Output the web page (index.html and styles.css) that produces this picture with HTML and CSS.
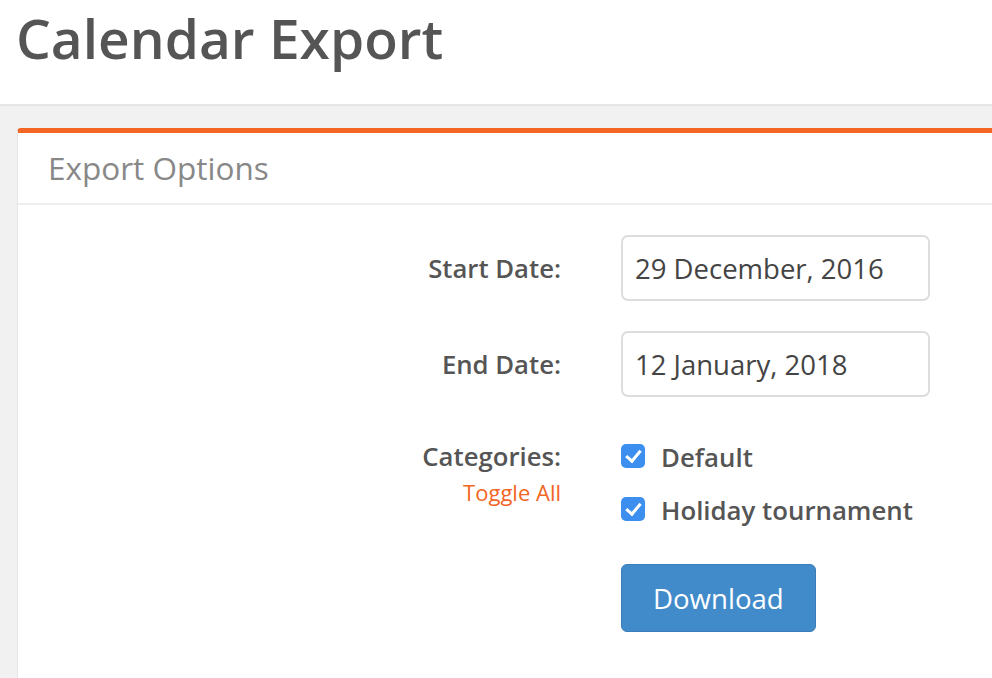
FILE: index.html
```html
<!DOCTYPE html>
<html lang="en">
<head>
    <meta charset="UTF-8">
    <meta name="viewport" content="width=device-width, initial-scale=1.0">
    <title>Calendar Export</title>
    <link rel="stylesheet" href="styles.css">
</head>
<body>
    <header class="page-header">
        <h1>Calendar Export</h1>
    </header>

    <main class="page-body">
        <section class="panel">
            <h2 class="panel-title">Export Options</h2>

            <form class="export-form">
                <div class="form-row">
                    <label class="form-label" for="startDate">Start Date:</label>
                    <input class="date-input" type="text" id="startDate" value="29 December, 2016">
                </div>

                <div class="form-row">
                    <label class="form-label" for="endDate">End Date:</label>
                    <input class="date-input" type="text" id="endDate" value="12 January, 2018">
                </div>

                <div class="form-row categories-row">
                    <div class="form-label">
                        <div>Categories:</div>
                        <a class="toggle-all" href="#">Toggle All</a>
                    </div>
                    <div class="category-list">
                        <label class="category">
                            <input type="checkbox" checked>
                            <span>Default</span>
                        </label>
                        <label class="category">
                            <input type="checkbox" checked>
                            <span>Holiday tournament</span>
                        </label>
                        <button type="submit" class="download-btn">Download</button>
                    </div>
                </div>
            </form>
        </section>
    </main>
</body>
</html>
```

FILE: styles.css
```css
html, body {
    margin: 0;
    padding: 0;
    height: 100%;
}

body {
    font-family: "Open Sans", "Liberation Sans", sans-serif;
    background-color: #f1f1f1;
    color: #555;
    overflow: hidden;
}

.page-header {
    background-color: #fff;
    height: 104px;
    border-bottom: 2px solid #e6e6e6;
}

.page-header h1 {
    margin: 0;
    padding: 0 0 0 16px;
    font-size: 55px;
    line-height: normal;
    font-weight: 600;
    color: #555;
}

.page-body {
    padding-top: 22px;
}

.panel {
    margin-left: 17px;
    margin-right: -20px;
    background-color: #fff;
    border-left: 1px solid #e6e6e6;
    border-top: 5px solid #f26522;
    border-top-left-radius: 4px;
    min-height: 620px;
}

.panel-title {
    margin: 0;
    padding: 19px 30px 19px 30px;
    font-size: 31.5px;
    line-height: 32px;
    font-weight: 400;
    color: #888;
    border-bottom: 2px solid #eee;
}

.export-form {
    padding-top: 30px;
}

.form-row {
    display: flex;
    align-items: center;
    margin-bottom: 30px;
}

.form-label {
    width: 543px;
    box-sizing: border-box;
    text-align: right;
    font-size: 25.7px;
    font-weight: 600;
    color: #555;
    margin-right: 60px;
}

.date-input {
    width: 309px;
    height: 66px;
    box-sizing: border-box;
    border: 2px solid #ddd;
    border-radius: 7px;
    padding: 0 12px;
    font-family: inherit;
    font-size: 27.5px;
    color: #444;
    outline: none;
}

.categories-row {
    align-items: flex-start;
    padding-top: 10px;
}

.categories-row .form-label {
    line-height: 40px;
}

.toggle-all {
    display: block;
    font-size: 22px;
    font-weight: 400;
    line-height: 30px;
    color: #f26522;
    text-decoration: none;
}

.category-list {
    display: flex;
    flex-direction: column;
    align-items: flex-start;
}

.category {
    display: flex;
    align-items: center;
    height: 40px;
    margin-bottom: 13px;
    font-size: 25.8px;
    font-weight: 600;
    color: #555;
}

.category input {
    appearance: none;
    -webkit-appearance: none;
    width: 24px;
    height: 24px;
    margin: -3px 16px 0 0;
    border-radius: 5px;
    background-color: #3c8fef;
    position: relative;
}

.category input:checked::after {
    content: "";
    position: absolute;
    left: 8px;
    top: 3px;
    width: 6px;
    height: 12px;
    border: solid #fff;
    border-width: 0 3px 3px 0;
    transform: rotate(40deg);
}

.download-btn {
    margin-top: 21px;
    background-color: #428bca;
    color: #fff;
    border: 1px solid #3b7db8;
    border-radius: 6px;
    padding: 13px 31px;
    font-family: inherit;
    font-size: 27.6px;
    line-height: 40px;
    cursor: pointer;
}
```
